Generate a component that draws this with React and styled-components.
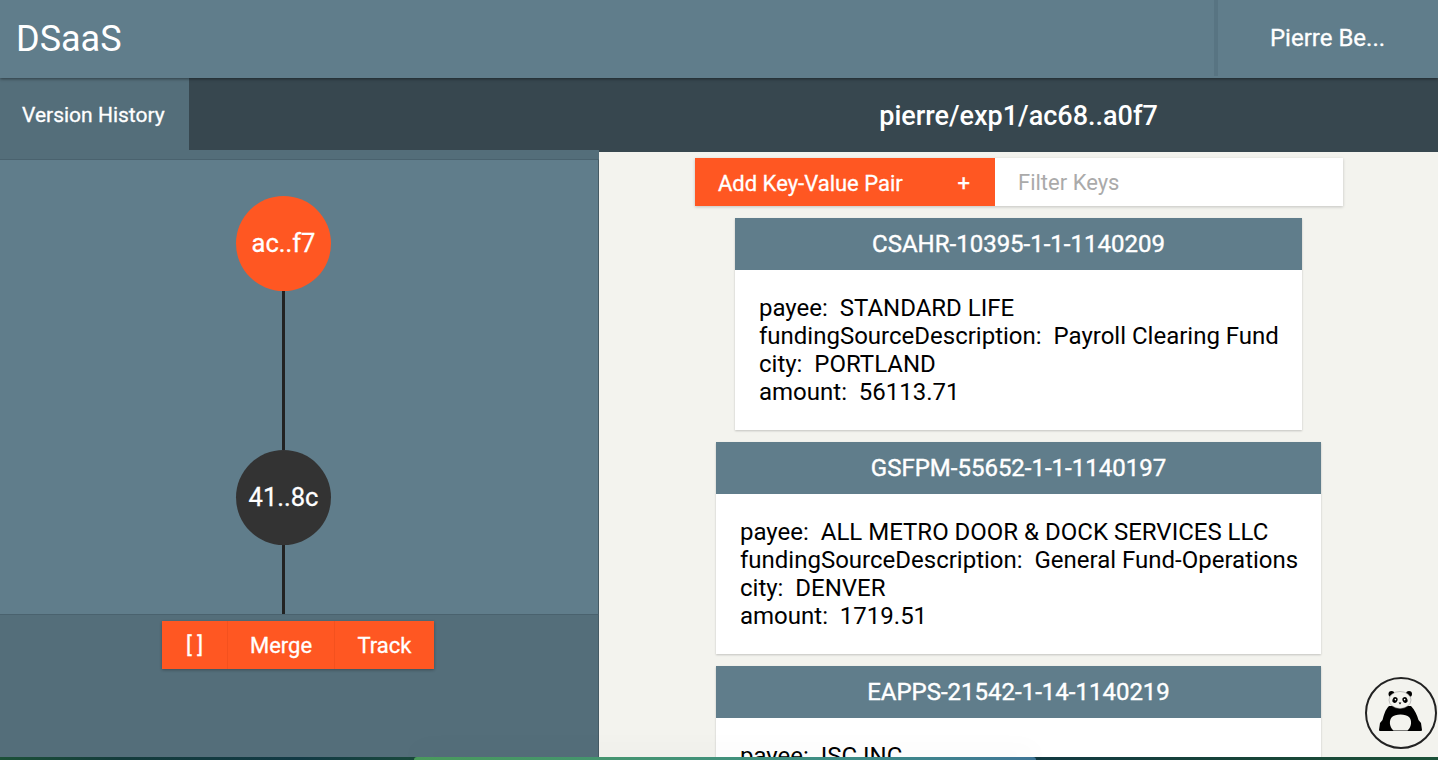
import styled, { createGlobalStyle } from 'styled-components'

const GlobalStyle = createGlobalStyle`
  html, body {
    margin: 0;
    padding: 0;
    height: 100%;
    overflow: hidden;
    font-family: Roboto, 'Liberation Sans', sans-serif;
  }
`

const records = [
  {
    id: 'CSAHR-10395-1-1-1140209',
    width: 567,
    rows: [
      ['payee', 'STANDARD LIFE'],
      ['fundingSourceDescription', 'Payroll Clearing Fund'],
      ['city', 'PORTLAND'],
      ['amount', '56113.71'],
    ],
  },
  {
    id: 'GSFPM-55652-1-1-1140197',
    width: 605,
    rows: [
      ['payee', 'ALL METRO DOOR & DOCK SERVICES LLC'],
      ['fundingSourceDescription', 'General Fund-Operations'],
      ['city', 'DENVER'],
      ['amount', '1719.51'],
    ],
  },
  {
    id: 'EAPPS-21542-1-14-1140219',
    width: 605,
    rows: [['payee', 'ISC INC']],
  },
]

function Panda() {
  return (
    <svg width="44" height="41" viewBox="0 0 44 41">
      <path d="M10 15 C6 19 5 24 3.5 29 L1 32 L0 39 Q0 40 1 40 L42 40 Q43 40 43 39 L42 32 L39.5 29 C38 24 36 19 32 15 Z" fill="#000" />
      <path d="M14.5 39.5 C10 35.5 10 29 13 26 C16 22.5 27 22.5 30 26 C33 29 33 35.5 28.5 39.5 Z" fill="#f3f3ee" />
      <circle cx="12.5" cy="3" r="3" fill="#000" />
      <circle cx="30" cy="3" r="3" fill="#000" />
      <ellipse cx="21" cy="9" rx="11" ry="8.5" fill="#f3f3ee" stroke="#888" strokeWidth="0.5" />
      <ellipse cx="16" cy="9" rx="2.5" ry="3" fill="#000" transform="rotate(20 16 9)" />
      <ellipse cx="26" cy="9" rx="2.5" ry="3" fill="#000" transform="rotate(-20 26 9)" />
      <circle cx="16.4" cy="8.6" r="0.8" fill="#fff" />
      <circle cx="25.6" cy="8.6" r="0.8" fill="#fff" />
      <path d="M19.6 11.6 h2.8 l-1.4 1.9 Z" fill="#000" />
    </svg>
  )
}

export default function App() {
  return (
    <>
      <GlobalStyle />
      <Page>
        <TopBar>
          <Brand>DSaaS</Brand>
          <UserCell>Pierre Be...</UserCell>
        </TopBar>
        <Body>
          <SidePanel>
            <TabRow>
              <Tab>Version History</Tab>
              <TabFiller />
            </TabRow>
            <Graph>
              <Node $current>ac..f7</Node>
              <Edge $height={159} />
              <Node>41..8c</Node>
              <Edge $height={70} />
            </Graph>
            <ActionArea>
              <ActionGroup>
                <ActionButton $width={65}>[ ]</ActionButton>
                <ActionButton $width={107}>Merge</ActionButton>
                <ActionButton $width={100}>Track</ActionButton>
              </ActionGroup>
            </ActionArea>
          </SidePanel>
          <Main>
            <PathBar>pierre/exp1/ac68..a0f7</PathBar>
            <Content>
              <Toolbar>
                <AddButton>
                  <span>Add Key-Value Pair</span>
                  <span>+</span>
                </AddButton>
                <FilterInput placeholder="Filter Keys" />
              </Toolbar>
              {records.map((record) => (
                <Card key={record.id} $width={record.width}>
                  <CardTitle>{record.id}</CardTitle>
                  <CardBody>
                    {record.rows.map(([key, value]) => (
                      <Row key={key}>
                        {key}:&nbsp; {value}
                      </Row>
                    ))}
                  </CardBody>
                </Card>
              ))}
              <PandaBadge>
                <Panda />
              </PandaBadge>
            </Content>
          </Main>
        </Body>
        <DesktopStrip>
          <DockGlow />
        </DesktopStrip>
      </Page>
    </>
  )
}

const Page = styled.div`
  display: flex;
  flex-direction: column;
  width: 1438px;
  height: 760px;
  overflow: hidden;
  background: #f3f3ee;
`

const TopBar = styled.header`
  position: relative;
  z-index: 2;
  flex: none;
  display: flex;
  justify-content: space-between;
  height: 78px;
  background: #607d8b;
  box-shadow: 0 1px 3px rgba(0, 0, 0, 0.45);
`

const Brand = styled.div`
  padding-left: 16px;
  font-size: 36px;
  line-height: 78px;
  color: #fff;
`

const UserCell = styled.div`
  box-sizing: border-box;
  width: 224px;
  height: 76px;
  border-left: 4px solid #587482;
  padding-right: 1px;
  font-size: 24px;
  line-height: 76px;
  text-align: center;
  color: #fff;
  -webkit-text-stroke: 0.3px #fff;
`

const Body = styled.div`
  flex: 1;
  display: flex;
  min-height: 0;
`

const SidePanel = styled.aside`
  flex: none;
  display: flex;
  flex-direction: column;
  width: 599px;
  background: #607d8b;
`

const TabRow = styled.div`
  flex: none;
  display: flex;
  align-items: flex-start;
  box-sizing: border-box;
  height: 82px;
  border-bottom: 1px solid #4a626e;
  background: #546e7a;
`

const Tab = styled.div`
  flex: none;
  box-sizing: border-box;
  width: 189px;
  height: 72px;
  padding-left: 22px;
  font-size: 21px;
  line-height: 74px;
  color: #fff;
  -webkit-text-stroke: 0.3px #fff;
`

const TabFiller = styled.div`
  flex: 1;
  height: 72px;
  background: #37474f;
`

const Graph = styled.div`
  flex: 1;
  display: flex;
  flex-direction: column;
  align-items: center;
  padding-top: 36px;
  padding-right: 31px;
  border-right: 1px solid #455a64;
  overflow: hidden;
`

const Node = styled.div`
  flex: none;
  width: 95px;
  height: 95px;
  border-radius: 50%;
  background: ${(props) => (props.$current ? '#ff5722' : '#333')};
  font-size: 25.5px;
  line-height: 95px;
  text-align: center;
  color: #fff;
  -webkit-text-stroke: 0.3px #fff;
`

const Edge = styled.div`
  flex: none;
  width: 3px;
  height: ${(props) => props.$height}px;
  background: #222;
`

const ActionArea = styled.div`
  flex: none;
  display: flex;
  justify-content: center;
  box-sizing: border-box;
  height: 143px;
  padding: 6px 2px 0 0;
  border-top: 1px solid #4a626e;
  border-right: 1px solid #455a64;
  background: #546e7a;
`

const ActionGroup = styled.div`
  display: flex;
  height: 48px;
  box-shadow: 0 1px 3px rgba(0, 0, 0, 0.3);
`

const ActionButton = styled.div`
  box-sizing: border-box;
  width: ${(props) => props.$width}px;
  background: #ff5722;
  font-size: 22px;
  line-height: 50px;
  text-align: center;
  color: #fff;
  -webkit-text-stroke: 0.3px #fff;

  & + & {
    border-left: 1px solid #f4511e;
  }
`

const Main = styled.main`
  flex: 1;
  display: flex;
  flex-direction: column;
  min-width: 0;
`

const PathBar = styled.div`
  flex: none;
  height: 74px;
  background: #37474f;
  font-size: 27px;
  font-weight: 500;
  line-height: 76px;
  text-align: center;
  color: #fff;
`

const Content = styled.div`
  flex: 1;
  position: relative;
  display: flex;
  flex-direction: column;
  align-items: center;
  padding-top: 6px;
  min-height: 0;
  overflow: hidden;
  background: #f3f3ee;
`

const Toolbar = styled.div`
  flex: none;
  display: flex;
  width: 648px;
  height: 48px;
  margin: 0 0 12px 1px;
  background: #fff;
  box-shadow: 0 1px 3px rgba(0, 0, 0, 0.2);
`

const AddButton = styled.div`
  flex: none;
  display: flex;
  justify-content: space-between;
  box-sizing: border-box;
  width: 300px;
  padding: 0 25px 0 23px;
  background: #ff5722;
  font-size: 22px;
  line-height: 51px;
  color: #fff;
  -webkit-text-stroke: 0.3px #fff;
`

const FilterInput = styled.input`
  flex: 1;
  min-width: 0;
  padding: 0 23px;
  border: 0;
  outline: 0;
  background: transparent;
  font-family: inherit;
  font-size: 22px;

  &::placeholder {
    color: #aaa;
    opacity: 1;
  }
`

const Card = styled.section`
  flex: none;
  box-sizing: border-box;
  width: ${(props) => props.$width}px;
  margin-bottom: 12px;
  background: #fff;
  box-shadow: 0 1px 2px rgba(0, 0, 0, 0.2);
`

const CardTitle = styled.h3`
  margin: 0;
  height: 52px;
  background: #607d8b;
  font-size: 24px;
  font-weight: 400;
  line-height: 52px;
  text-align: center;
  color: #fff;
  -webkit-text-stroke: 0.4px #fff;
`

const CardBody = styled.div`
  padding: 24px;
`

const Row = styled.div`
  font-size: 24px;
  line-height: 28px;
  white-space: nowrap;
  color: #000;
`

const PandaBadge = styled.div`
  position: absolute;
  right: 1px;
  bottom: 8px;
  display: flex;
  align-items: center;
  justify-content: center;
  box-sizing: border-box;
  width: 72px;
  height: 72px;
  border: 2px solid #222;
  border-radius: 50%;
  padding-bottom: 4px;
  background: #f3f3ee;
`

const DesktopStrip = styled.div`
  position: relative;
  z-index: 3;
  flex: none;
  height: 3px;
  background: linear-gradient(90deg, #1c5138 0, #143c3c 120px, #123a45 300px, #1a4a3c 420px, #123a42 1040px, #174438 1250px, #1c5138 100%);
`

const DockGlow = styled.div`
  position: absolute;
  left: 414px;
  top: 0;
  width: 622px;
  height: 3px;
  border-radius: 3px 3px 0 0;
  background: linear-gradient(90deg, #4a9a5c, #3d8c86 70%, #3f7596);
  box-shadow: 0 -4px 24px rgba(0, 0, 0, 0.12);
`
